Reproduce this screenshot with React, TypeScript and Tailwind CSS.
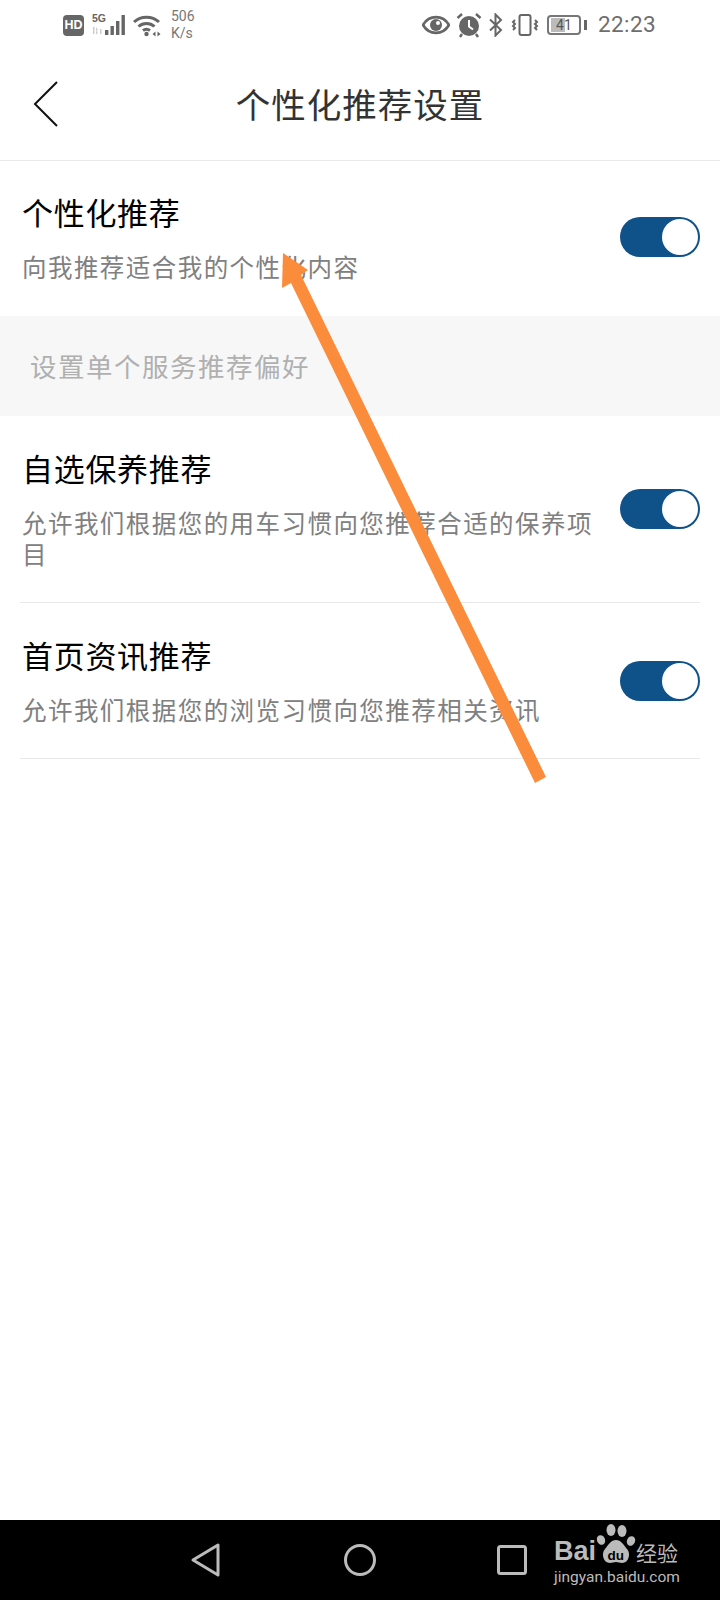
const CJK = "font-['Noto_Sans_CJK_SC','Noto_Sans',sans-serif]";

function StatusBar() {
  return (
    <div className="h-[50px] flex items-center justify-between pl-[63px] pr-[64px] text-[#666]">
      <div className="flex items-center">
        <div className="w-[21px] h-[21px] rounded-[4px] bg-[#666] text-white text-[12.500px] font-bold flex items-center justify-center font-['Liberation_Sans',sans-serif] leading-none">
          HD
        </div>
        <svg width="38" height="24" viewBox="0 0 38 24" className="ml-[8px]" fill="#666">
          <text x="0" y="9" fontSize="10.500" fontWeight="700" fontFamily="Liberation Sans, sans-serif">5G</text>
          <path d="M1 14h1.500v7H1zM4 14l2 3-2 1 2 1-2 3zM8 16h1.500v5H8z" fill="#ccc" />
          <rect x="13" y="17" width="3.400" height="5" />
          <rect x="18.500" y="13" width="3.400" height="9" />
          <rect x="24" y="8" width="3.400" height="14" />
          <rect x="29.500" y="2" width="3.400" height="20" />
        </svg>
        <svg width="30" height="24" viewBox="0 0 30 24" className="ml-[3px]" fill="none" stroke="#666" strokeWidth="3">
          <path d="M1 9c7-6.500 18-6.500 25 0" />
          <path d="M5.500 13.500c4.500-4 11.500-4 16 0" />
          <path d="M10 17.500c2-1.500 5-1.500 7 0" />
          <circle cx="13.500" cy="21" r="2.200" fill="#666" stroke="none" />
          <path d="M19.500 21l3-2.500v5zM24.500 18.500l3 2.500-3 2.500z" fill="#666" stroke="none" />
        </svg>
        <div className="ml-[8px] w-[28px] text-[14px] leading-[17px] font-['Roboto',sans-serif] text-[#777]">
          <div>506</div>
          <div>K/s</div>
        </div>
      </div>
      <div className="flex items-center">
        <svg width="28" height="20" viewBox="0 0 28 20">
          <path d="M1 10c6-10.500 20-10.500 26 0-6 10.500-20 10.500-26 0z" fill="none" stroke="#666" strokeWidth="2.800" />
          <circle cx="14" cy="10" r="6" fill="#666" />
          <circle cx="16" cy="8" r="2" fill="#fff" />
        </svg>
        <svg width="26" height="26" viewBox="0 0 26 26" className="ml-[6px]">
          <circle cx="13" cy="14" r="10" fill="#666" />
          <path d="M13 8v6.500l4 3" fill="none" stroke="#fff" strokeWidth="2" />
          <path d="M1.500 6L6 2M24.500 6L20 2M6 22l-2 3M20 22l2 3" stroke="#666" strokeWidth="2.400" fill="none" />
        </svg>
        <svg width="16" height="24" viewBox="0 0 16 24" className="ml-[6px]" fill="none" stroke="#666" strokeWidth="2">
          <path d="M2 6.500l11 10.500-5.500 5.500V1.500L13 7 2 17.500" />
        </svg>
        <svg width="28" height="24" viewBox="0 0 28 24" className="ml-[7px]" fill="none" stroke="#666" strokeWidth="2">
          <rect x="8.500" y="2" width="11" height="20" rx="2" />
          <path d="M4 7l-2 2 2 2-2 2 2 2-2 2M24 7l2 2-2 2 2 2-2 2 2 2" />
        </svg>
        <div className="ml-[8px] flex items-center">
          <div className="relative w-[34px] h-[20px] rounded-[4px] border-2 border-[#777] overflow-hidden">
            <div className="ml-[2px] my-[1px] h-[14px] w-[14px] bg-[#bbb]" />
            <div className="absolute inset-0 flex items-center justify-center text-[14px] leading-none font-['Roboto',sans-serif] text-[#555]">
              41
            </div>
          </div>
          <div className="ml-[3px] w-[3px] h-[10px] bg-[#666]" />
        </div>
        <div className="ml-[11px] mb-[1px] text-[22.500px] leading-none tracking-[0.4px] font-['Roboto',sans-serif] text-[#6e6e6e]">
          22:23
        </div>
      </div>
    </div>
  );
}

function Toggle() {
  return (
    <div className="w-[80px] h-[40px] rounded-full bg-[#0f5189] flex items-center justify-end pr-[2px] shrink-0">
      <div className="w-[36px] h-[36px] rounded-full bg-white" />
    </div>
  );
}

function SettingRow({ title, desc, className, divider }: { title: string; desc: string; className: string; divider?: boolean }) {
  return (
    <div className={`flex items-center justify-between ml-[20px] mr-[20px] ${divider ? "border-b border-[#e8e8e8]" : ""} ${className}`}>
      <div className="w-[590px] pl-[2px]">
        <div className="text-[31px] leading-[38px] text-black tracking-[0.7px]">{title}</div>
        <div className="mt-[20px] text-[24.500px] leading-[31px] text-[#808080] tracking-[1.450px]">{desc}</div>
      </div>
      <Toggle />
    </div>
  );
}

function NavBar() {
  return (
    <div className="h-[80px] bg-black flex items-center pl-[190px] relative">
      <svg width="32" height="36" viewBox="0 0 32 36" fill="none" stroke="#bbb" strokeWidth="3" strokeLinejoin="round">
        <path d="M28 3v30L3 18z" />
      </svg>
      <svg width="34" height="34" viewBox="0 0 34 34" className="ml-[121px]" fill="none" stroke="#bbb" strokeWidth="3">
        <circle cx="17" cy="17" r="14.500" />
      </svg>
      <svg width="30" height="30" viewBox="0 0 30 30" className="ml-[120px]" fill="none" stroke="#bbb" strokeWidth="3">
        <rect x="1.500" y="1.500" width="27" height="27" rx="2" />
      </svg>
      <div className="absolute left-[554px] top-[3px] w-[130px] text-[#bbb]">
        <div className="flex items-end h-[42px]">
          <span className="w-[41px] text-[27px] leading-[28px] font-bold font-['Liberation_Sans',sans-serif]">Bai</span>
          <svg width="41" height="42" viewBox="0 0 41 42" fill="#bbb" className="shrink-0">
            <ellipse cx="16" cy="7" rx="4.500" ry="6" />
            <ellipse cx="27" cy="8" rx="4.500" ry="6" />
            <ellipse cx="6" cy="17" rx="4" ry="5" transform="rotate(-25 6 17)" />
            <ellipse cx="36" cy="18" rx="4" ry="5" transform="rotate(25 36 18)" />
            <path d="M21 17c5 0 7 4 11 9 4 4 2 14-5 14-2 0-4-1-6-1s-4 1-6 1c-7 0-9-10-5-14 4-5 6-9 11-9z" />
            <text x="12.500" y="37" fontSize="13.500" fontWeight="700" fill="#000" fontFamily="Liberation Sans, sans-serif">du</text>
          </svg>
          <span className={`text-[21px] leading-[26px] ${CJK}`}>经验</span>
        </div>
        <div className="mt-[3px] text-[15.500px] leading-[18px] font-['Roboto',sans-serif] whitespace-nowrap">jingyan.baidu.com</div>
      </div>
    </div>
  );
}

export default function App() {
  return (
    <div className={`relative w-[720px] h-[1600px] bg-white flex flex-col overflow-hidden ${CJK}`}>
      <StatusBar />
      <div className="h-[111px] shrink-0 border-b border-[#e8e8e8] relative flex items-center justify-center pb-[5px]">
        <svg width="26" height="46" viewBox="0 0 26 46" fill="none" stroke="#111" strokeWidth="2" className="absolute left-[33px] top-[31px]">
          <path d="M24 1L2 23l22 22" />
        </svg>
        <div className="text-[34.500px] leading-[44px] text-[#333] tracking-[1px]">个性化推荐设置</div>
      </div>

      <SettingRow title="个性化推荐" desc="向我推荐适合我的个性化内容" className="h-[155px] pb-[3px]" />

      <div className="h-[100px] shrink-0 bg-[#f7f7f7] flex items-center pl-[30px] text-[26.500px] tracking-[1.500px] text-[#b0b0b0]">
        设置单个服务推荐偏好
      </div>

      <SettingRow title="自选保养推荐" desc="允许我们根据您的用车习惯向您推荐合适的保养项目" className="h-[187px]" divider />
      <SettingRow title="首页资讯推荐" desc="允许我们根据您的浏览习惯向您推荐相关资讯" className="h-[156px]" divider />

      <div className="flex-1" />
      <NavBar />

      {/* annotation arrow drawn over the screenshot */}
      <svg width="720" height="1600" viewBox="0 0 720 1600" className="absolute inset-0 pointer-events-none">
        <path d="M283 253L308 270 301 275 546 777 535 783 291 283 282 288z" fill="#fb8c3c" />
      </svg>
    </div>
  );
}
